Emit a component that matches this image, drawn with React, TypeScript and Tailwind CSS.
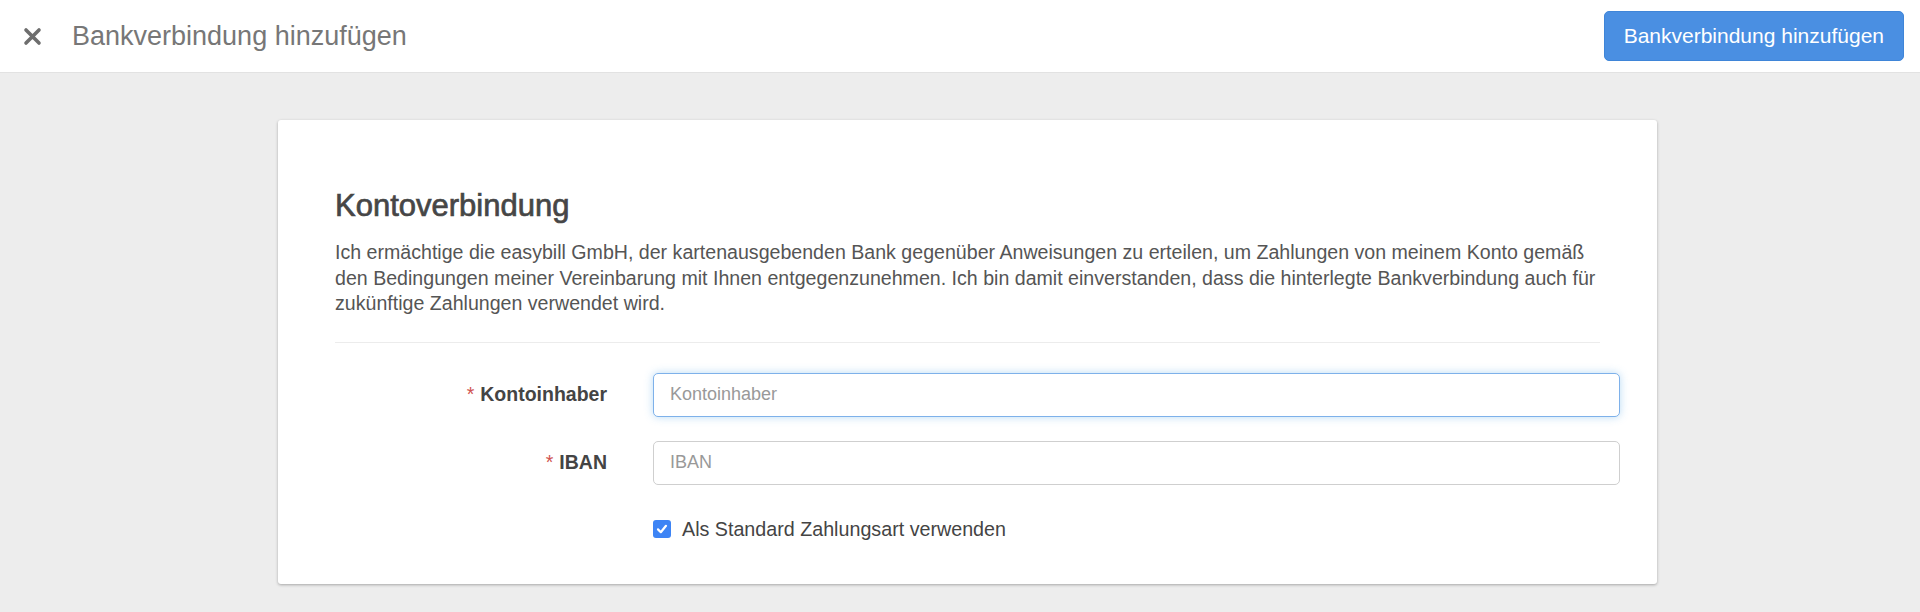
import { useState } from 'react'

const TITLE = 'Bankverbindung hinzufügen'

const MANDATE =
  'Ich ermächtige die easybill GmbH, der kartenausgebenden Bank gegenüber Anweisungen zu erteilen, um Zahlungen von meinem Konto gemäß den Bedingungen meiner Vereinbarung mit Ihnen entgegenzunehmen. Ich bin damit einverstanden, dass die hinterlegte Bankverbindung auch für zukünftige Zahlungen verwendet wird.'

function Field({ label, placeholder, focused }: { label: string; placeholder: string; focused?: boolean }) {
  return (
    <div className="flex items-center">
      <label className="w-[272px] shrink-0 text-right text-[19.5px] font-bold text-[#444]">
        <span className="mr-[6px] font-normal text-[#d0534f]">*</span>
        {label}
      </label>
      <div className="ml-[46px] flex-1">
        <input
          autoFocus={focused}
          placeholder={placeholder}
          className={
            focused
              ? 'h-[44px] w-full rounded-[5px] border border-[#7eb1ea] bg-white px-[16px] text-[18px] text-[#444] shadow-[0_0_9px_rgba(102,175,233,0.45)] outline-none placeholder:text-[#999]'
              : 'h-[44px] w-full rounded-[5px] border border-[#cfcfcf] bg-white px-[16px] text-[18px] text-[#444] outline-none placeholder:text-[#999]'
          }
        />
      </div>
    </div>
  )
}

export default function App() {
  const [useDefault, setUseDefault] = useState(true)

  return (
    <div className="min-h-[612px] bg-[#ededed] font-['Liberation_Sans',Arial,sans-serif]">
      {/* Top bar */}
      <header className="flex h-[73px] items-center border-b border-[#e2e2e2] bg-white pl-[23px] pr-[16px]">
        <button aria-label="Schließen" className="text-[#6e6e6e]">
          <svg width="19" height="19" viewBox="0 0 19 19">
            <path d="M3 3 L16 16 M16 3 L3 16" stroke="currentColor" strokeWidth="3.6" strokeLinecap="round" />
          </svg>
        </button>
        <h1 className="ml-[30px] text-[27px] text-[#777]">{TITLE}</h1>
        <button className="ml-auto h-[50px] rounded-[5px] border border-[#3f85d8] bg-[#4a8fe2] px-[19px] text-[21px] text-white">
          {TITLE}
        </button>
      </header>

      {/* Card */}
      <main className="pt-[47px]">
        <div className="ml-[278px] h-[464px] w-[1379px] rounded-[3px] bg-white pt-[68px] shadow-[0_1px_3px_rgba(0,0,0,0.3)]">
          <div className="px-[57px]">
            <h2 className="text-[31px] leading-[36px] text-[#464646] [-webkit-text-stroke:0.7px_#464646]">Kontoverbindung</h2>
            <p className="mt-[16px] mr-[-8px] text-[19.6px] leading-[25.5px] text-[#555]">{MANDATE}</p>
            <hr className="mt-[25px] border-[#ececec]" />
          </div>

          <form className="mt-[30px] flex flex-col gap-[24px] pl-[57px] pr-[37px]">
            <Field label="Kontoinhaber" placeholder="Kontoinhaber" focused />
            <Field label="IBAN" placeholder="IBAN" />
            <label className="mt-[8px] ml-[318px] flex cursor-pointer items-center gap-[11px] text-[19.7px] leading-[25px] text-[#444]">
              <span
                onClick={() => setUseDefault(!useDefault)}
                className={
                  useDefault
                    ? 'flex h-[18px] w-[18px] items-center justify-center rounded-[3px] bg-[#3d84f5]'
                    : 'flex h-[18px] w-[18px] items-center justify-center rounded-[3px] border border-[#999] bg-white'
                }
              >
                {useDefault && (
                  <svg width="12" height="12" viewBox="0 0 12 12">
                    <path d="M2 6.4 L4.8 9.2 L10 2.8" fill="none" stroke="white" strokeWidth="2.2" strokeLinecap="round" strokeLinejoin="round" />
                  </svg>
                )}
              </span>
              Als Standard Zahlungsart verwenden
            </label>
          </form>
        </div>
      </main>
    </div>
  )
}
